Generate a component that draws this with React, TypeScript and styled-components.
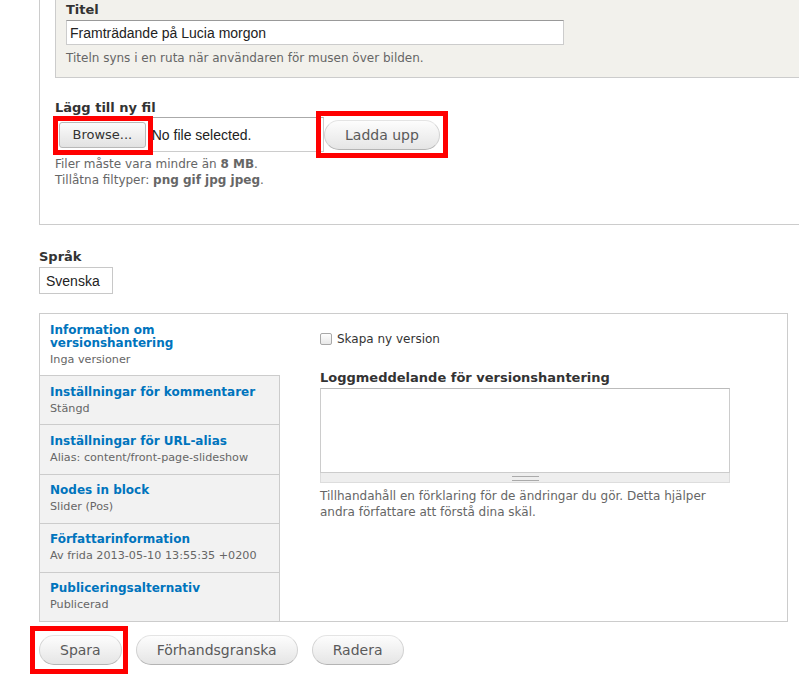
import React from "react";
import styled, { createGlobalStyle } from "styled-components";

const GlobalStyle = createGlobalStyle`
  html, body { margin: 0; padding: 0; background: #fff; }
  body {
    font-family: "DejaVu Sans", Verdana, sans-serif;
    font-size: 13px;
    color: #333;
    overflow: hidden;
  }
  * { box-sizing: border-box; }
`;

const Page = styled.div`
  width: 799px;
  padding: 0 0 20px 39px;
  overflow: hidden;
`;

const OuterFieldset = styled.section`
  width: 790px;
  border: 1px solid #ccc;
  border-top: none;
  border-right: none;
  padding: 0 0 36px 15px;
`;

const NestedFieldset = styled.section`
  background: #f2f1ec;
  border: 1px solid #ccc;
  border-top: none;
  border-right: none;
  padding: 2px 0 11.5px 10px;
`;

const FormItem = styled.div<{ $mt?: number }>`
  margin-top: ${(p) => p.$mt ?? 0}px;
`;

const Label = styled.label`
  display: block;
  font-weight: bold;
  font-size: 13px;
  line-height: 16px;
  color: #333;
`;

const TextInput = styled.input`
  display: block;
  width: 498px;
  height: 25px;
  margin-top: 2px;
  padding: 2px 3px;
  border: 1px solid #ccc;
  border-top-color: #999;
  background: #fff;
  font-family: "Liberation Sans", Arial, sans-serif;
  font-size: 14px;
  color: #222;
  outline: none;
`;

const Description = styled.div<{ $mt?: number }>`
  margin-top: ${(p) => p.$mt ?? 4}px;
  font-size: 12px;
  line-height: 16px;
  color: #666;

  strong {
    font-weight: bold;
  }
`;

const FileRow = styled.div`
  display: flex;
  align-items: center;
  margin-top: 1px;
`;

const FileBox = styled.div`
  display: flex;
  align-items: center;
  width: 269px;
  height: 35px;
  padding: 0 3px;
  border: 1px solid #ccc;
  border-top-color: #aaa;
  background: #fff;
`;

const BrowseButton = styled.button`
  height: 26px;
  padding: 0 12.5px;
  border: 1px solid #b8b8b8;
  border-radius: 3px;
  background: linear-gradient(#fbfbfb, #e2e2e2);
  font-family: "DejaVu Sans", Verdana, sans-serif;
  font-size: 13px;
  color: #333;
`;

const FileName = styled.span`
  margin-left: 6px;
  font-family: "Liberation Sans", Arial, sans-serif;
  font-size: 14px;
  color: #222;
`;

const Button = styled.button`
  height: 30px;
  padding: 0 20px;
  border: 1px solid #d2d2d2;
  border-top-color: #e4e4e4;
  border-bottom-color: #b4b4b4;
  border-radius: 20px;
  background: linear-gradient(#fdfdfd, #e5e5e5);
  font-family: "DejaVu Sans", Verdana, sans-serif;
  font-size: 14px;
  color: #5a5a5a;
`;

const Marked = styled.span`
  position: relative;
  display: inline-flex;
`;

const Highlight = styled.span<{ $t: number; $r: number; $b: number; $l: number }>`
  position: absolute;
  top: ${(p) => -p.$t}px;
  right: ${(p) => -p.$r}px;
  bottom: ${(p) => -p.$b}px;
  left: ${(p) => -p.$l}px;
  border: 5px solid #f00;
  pointer-events: none;
`;

const SelectBox = styled.div`
  width: 74px;
  height: 27px;
  margin-top: 2px;
  padding: 0 6px;
  display: flex;
  align-items: center;
  border: 1px solid #c8c8c8;
  background: #fff;
  font-family: "Liberation Sans", Arial, sans-serif;
  font-size: 14px;
  color: #222;
`;

const VerticalTabs = styled.div`
  display: flex;
  width: 749px;
  margin-top: 19px;
  border: 1px solid #ccc;
  background: #fff;
`;

const TabList = styled.ul`
  width: 240px;
  margin: 0;
  padding: 0;
  list-style: none;
  background: #f2f2f2;
  border-right: 1px solid #ccc;
`;

const Tab = styled.li<{ $active?: boolean }>`
  position: relative;
  padding: 9.5px 10px 5.9px;
  border-bottom: 1px solid #ccc;
  background: ${(p) => (p.$active ? "#fff" : "#f2f2f2")};
  margin-right: ${(p) => (p.$active ? "-1px" : "0")};

  &:last-child {
    border-bottom: none;
  }
`;

const TabTitle = styled.a`
  display: block;
  font-weight: bold;
  font-size: 12px;
  line-height: 13px;
  color: #0074bd;
  text-decoration: none;
`;

const TabSummary = styled.div`
  font-size: 11.2px;
  line-height: 19.8px;
  color: #666;
`;

const Pane = styled.div`
  flex: 1;
  padding: 16.6px 56px 0 40px;
`;

const CheckRow = styled.label`
  display: flex;
  align-items: center;
  font-size: 12px;
  line-height: 16px;
  color: #333;
`;

const CheckBox = styled.span`
  width: 12px;
  height: 12px;
  margin-right: 5px;
  border: 1px solid #a8a8a8;
  border-radius: 2px;
  background: linear-gradient(#fdfdfd, #e8e8e8);
`;

const TextArea = styled.textarea`
  display: block;
  width: 410px;
  height: 85px;
  margin: 2px 0 0;
  padding: 4px;
  border: 1px solid #ccc;
  border-top-color: #bbb;
  background: #fff;
  resize: none;
  outline: none;
`;

const Grippie = styled.div`
  display: flex;
  justify-content: center;
  width: 410px;
  height: 10px;
  padding-top: 3px;
  border: 1px solid #ddd;
  border-top: none;
  background: #eee;

  &::after {
    content: "";
    width: 27px;
    height: 3px;
    border-top: 1px solid #aaa;
    border-bottom: 1px solid #aaa;
  }
`;

const Actions = styled.div`
  display: flex;
  gap: 14px;
  margin-top: 13px;
`;

const tabs = [
  { title: "Information om versionshantering", summary: "Inga versioner", active: true },
  { title: "Inställningar för kommentarer", summary: "Stängd" },
  { title: "Inställningar för URL-alias", summary: "Alias: content/front-page-slideshow" },
  { title: "Nodes in block", summary: "Slider (Pos)" },
  { title: "Författarinformation", summary: "Av frida 2013-05-10 13:55:35 +0200" },
  { title: "Publiceringsalternativ", summary: "Publicerad" },
];

export default function App() {
  return (
    <>
      <GlobalStyle />
      <Page>
        <OuterFieldset>
          <NestedFieldset>
            <Label>Titel</Label>
            <TextInput defaultValue="Framträdande på Lucia morgon" />
            <Description $mt={4.5}>
              Titeln syns i en ruta när användaren för musen över bilden.
            </Description>
          </NestedFieldset>

          <FormItem $mt={22}>
            <Label>Lägg till ny fil</Label>
            <FileRow>
              <FileBox>
                <Marked>
                  <BrowseButton>Browse...</BrowseButton>
                  <Highlight $t={6} $r={7} $b={7} $l={6} />
                </Marked>
                <FileName>No file selected.</FileName>
              </FileBox>
              <Marked>
                <Button>Ladda upp</Button>
                <Highlight $t={9} $r={8} $b={8} $l={8} />
              </Marked>
            </FileRow>
            <Description $mt={4}>
              Filer måste vara mindre än <strong>8 MB</strong>.
              <br />
              Tillåtna filtyper: <strong>png gif jpg jpeg</strong>.
            </Description>
          </FormItem>
        </OuterFieldset>

        <FormItem $mt={24}>
          <Label>Språk</Label>
          <SelectBox>Svenska</SelectBox>
        </FormItem>

        <VerticalTabs>
          <TabList>
            {tabs.map((t) => (
              <Tab key={t.title} $active={t.active}>
                <TabTitle>{t.title}</TabTitle>
                <TabSummary>{t.summary}</TabSummary>
              </Tab>
            ))}
          </TabList>
          <Pane>
            <CheckRow>
              <CheckBox />
              Skapa ny version
            </CheckRow>
            <FormItem $mt={23.4}>
              <Label>Loggmeddelande för versionshantering</Label>
              <TextArea />
              <Grippie />
              <Description $mt={4.6}>
                Tillhandahåll en förklaring för de ändringar du gör. Detta hjälper
                andra författare att förstå dina skäl.
              </Description>
            </FormItem>
          </Pane>
        </VerticalTabs>

        <Actions>
          <Marked>
            <Button>Spara</Button>
            <Highlight $t={9} $r={6} $b={9} $l={9} />
          </Marked>
          <Button>Förhandsgranska</Button>
          <Button>Radera</Button>
        </Actions>
      </Page>
    </>
  );
}
